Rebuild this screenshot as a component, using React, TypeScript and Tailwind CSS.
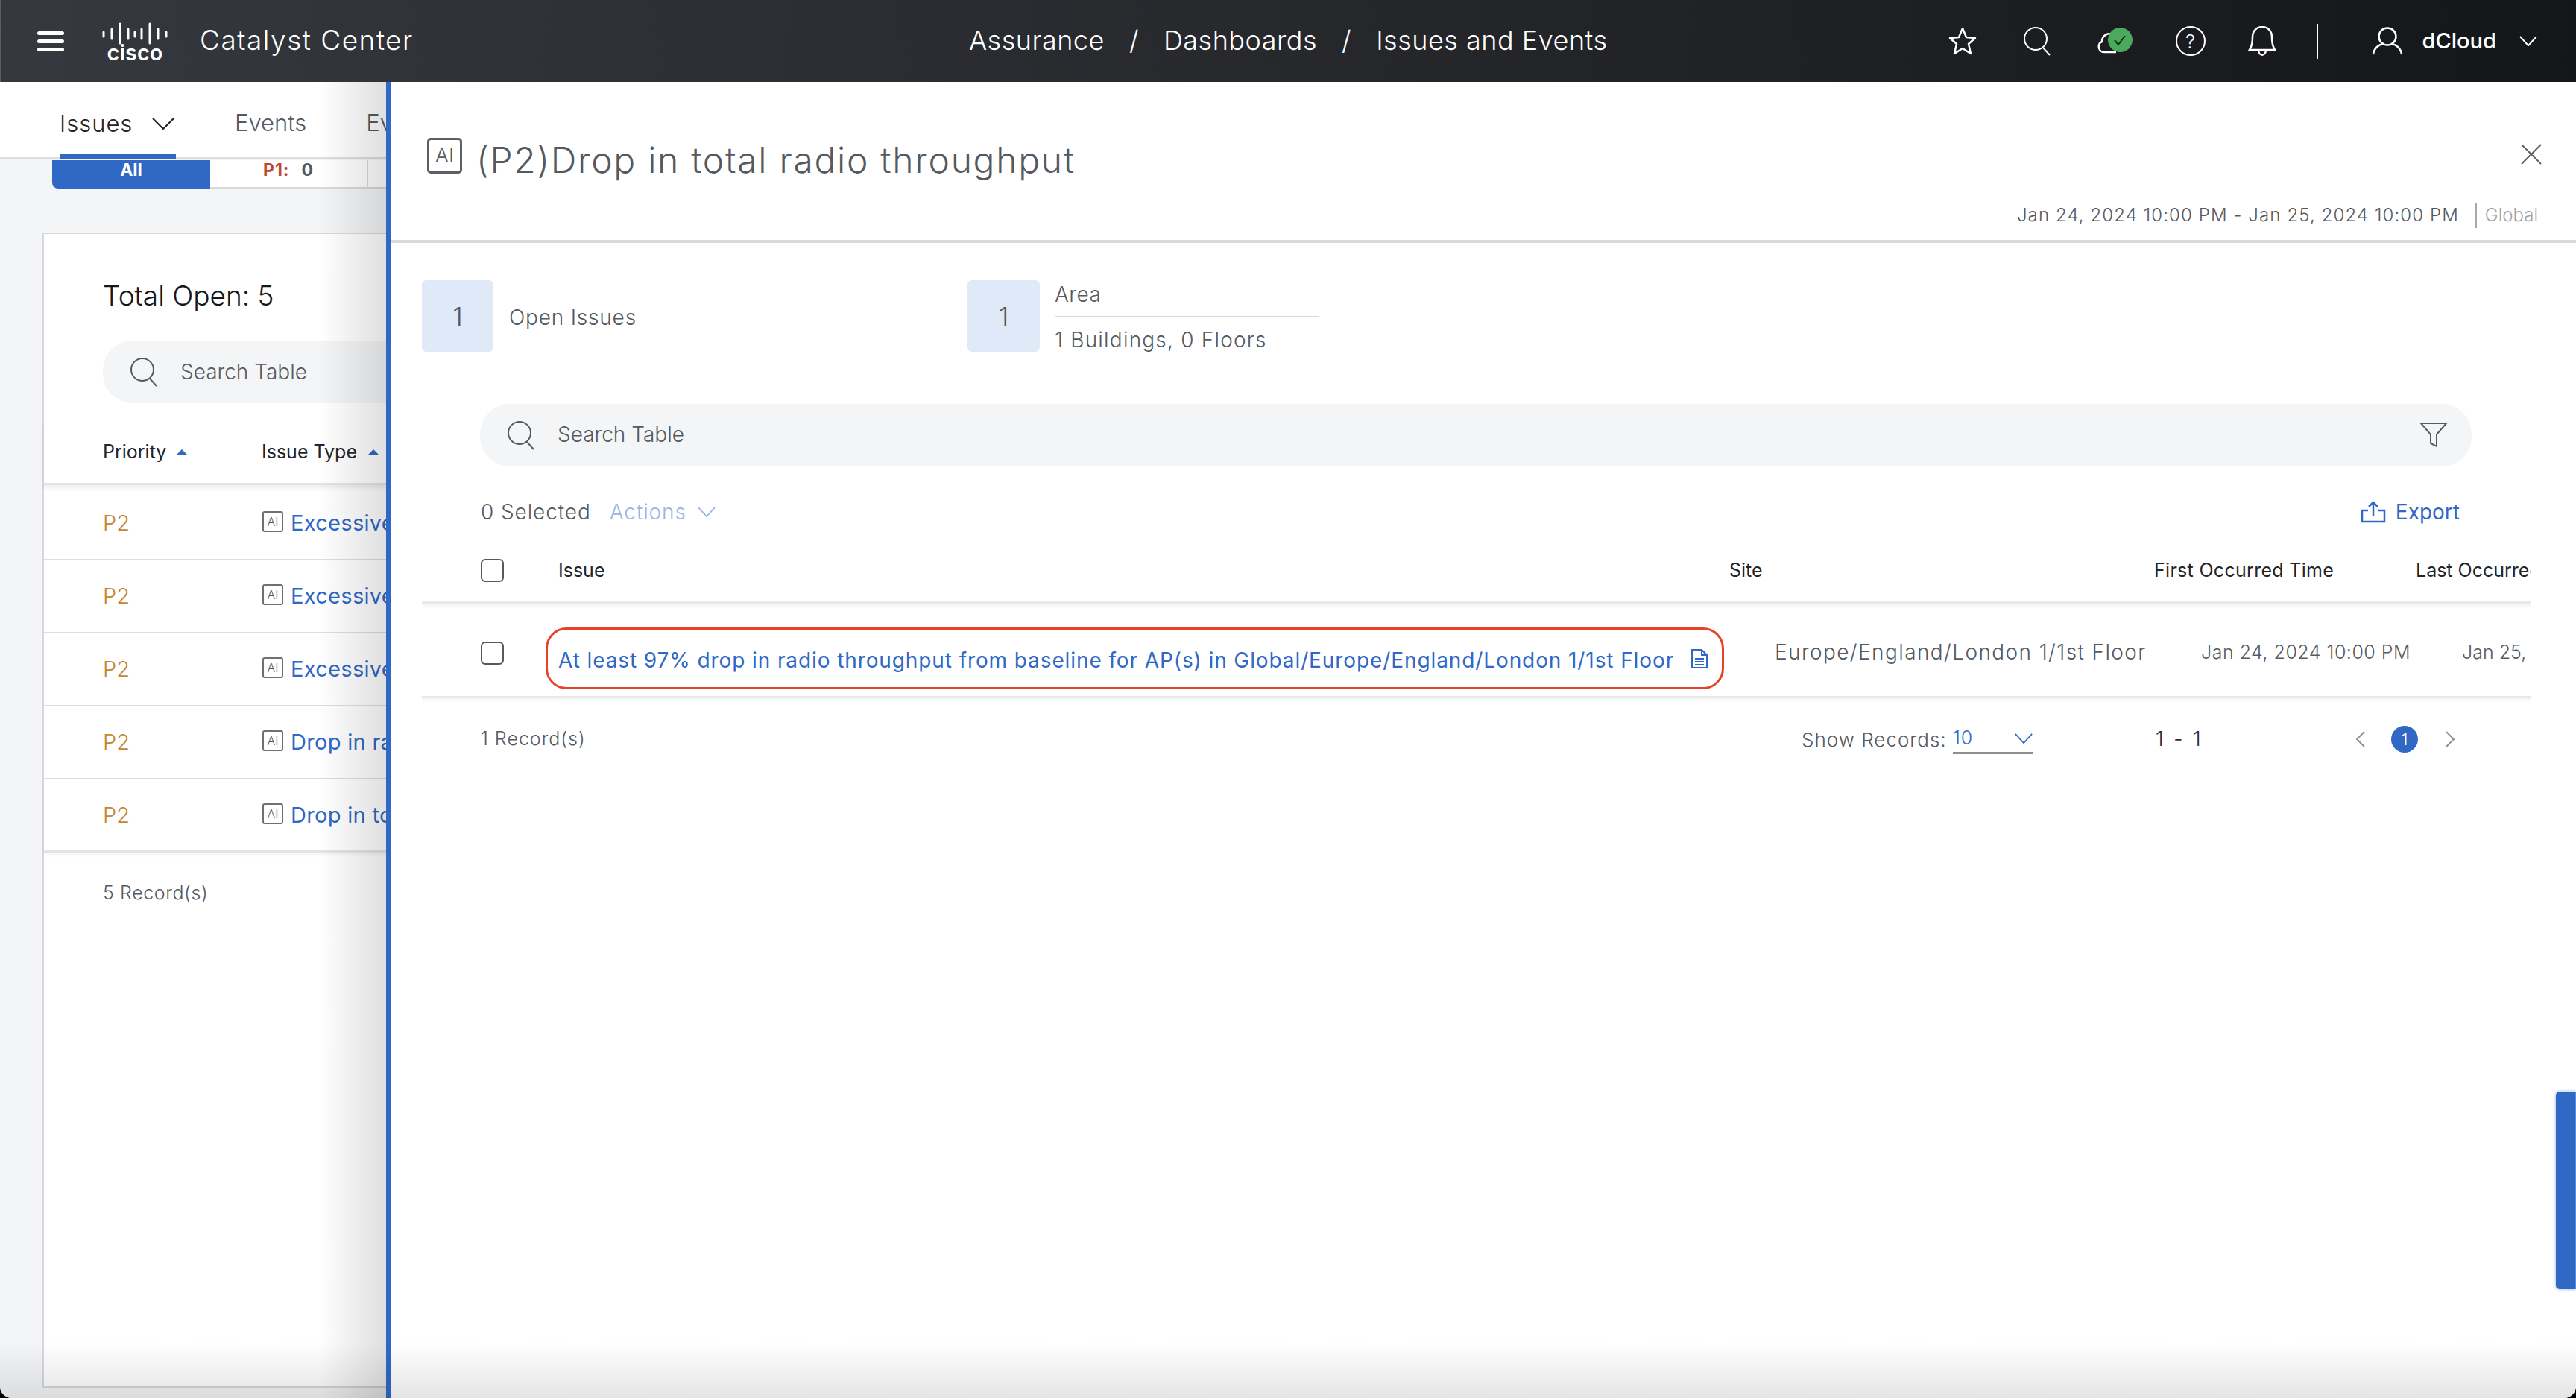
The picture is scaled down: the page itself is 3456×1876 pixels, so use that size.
import React from "react";

const rows = ["Excessive", "Excessive", "Excessive", "Drop in ra", "Drop in to"];

const SearchIcon = () => (
  <svg width="38" height="40" viewBox="0 0 38 40" fill="none" stroke="currentColor" strokeWidth="2">
    <circle cx="17" cy="17" r="15" />
    <path d="M27 29 L36 39" />
  </svg>
);

const Chevron = ({ w = 28, h = 16, sw = 2 }: { w?: number; h?: number; sw?: number }) => (
  <svg width={w} height={h} viewBox="0 0 28 16" fill="none" stroke="currentColor" strokeWidth={sw} preserveAspectRatio="none">
    <path d="M1 1 L14 15 L27 1" />
  </svg>
);

const AiIcon = ({ big }: { big?: boolean }) => (
  <span
    className={
      big
        ? "flex h-[48px] w-[47px] shrink-0 items-center justify-center rounded-[5px] border-[3px] border-[#5b6067] text-[27px] font-light text-[#555a61]"
        : "flex h-[28px] w-[28px] shrink-0 items-center justify-center rounded-[3px] border-2 border-[#6d7177] text-[16px] font-light text-[#555a61]"
    }
  >
    AI
  </span>
);

const CiscoLogo = () => (
  <div className="flex w-[88px] flex-col items-center">
    <svg width="88" height="30" viewBox="0 0 88 30" fill="none" stroke="#fff" strokeWidth="3" strokeLinecap="round">
      <path d="M2 13 V19 M13 9 V22 M24 2 V28 M35 9 V22 M44 13 V19 M53 9 V22 M64 2 V28 M75 9 V22 M86 13 V19" />
    </svg>
    <span className="mt-[1px] text-[29px] font-semibold leading-[20px] text-white">cisco</span>
  </div>
);

export default function App() {
  return (
    <div className="h-[1876px] w-[3456px] overflow-hidden bg-black font-['Inter',sans-serif]">
      <div className="relative flex h-[1876px] flex-col overflow-hidden rounded-b-[16px] bg-white">
        {/* top bar */}
        <header className="relative flex h-[110px] shrink-0 items-center border-l-2 border-[#5a5d62] bg-gradient-to-r from-[#35383e] via-[#26282c] to-[#14161a] text-white">
          <div className="ml-[48px] flex w-[36px] flex-col gap-[6px]">
            <div className="h-[5px] rounded-full bg-white" />
            <div className="h-[5px] rounded-full bg-white" />
            <div className="h-[5px] rounded-full bg-white" />
          </div>
          <div className="ml-[51px]">
            <CiscoLogo />
          </div>
          <span className="ml-[43px] pb-[3px] text-[37px] font-light tracking-[1.5px]">Catalyst Center</span>
          <nav className="ml-[745px] flex items-center gap-[33px] pb-[3px] text-[36px] font-light tracking-[0.5px]">
            <span>Assurance</span>
            <span>/</span>
            <span>Dashboards</span>
            <span>/</span>
            <span>Issues and Events</span>
          </nav>
          <div className="ml-[457px] flex items-center">
            <svg width="38" height="38" viewBox="0 0 38 38" fill="none" stroke="#fff" strokeWidth="2.5" strokeLinejoin="round">
              <path d="M19 2 L24 14 L36 15 L27 23 L30 36 L19 29 L8 36 L11 23 L2 15 L14 14 Z" />
            </svg>
            <span className="ml-[62px] text-white">
              <SearchIcon />
            </span>
            <span className="relative ml-[61px] block h-[36px] w-[48px]">
              <svg width="48" height="36" viewBox="0 0 48 36" fill="none" stroke="#fff" strokeWidth="2.5">
                <path d="M26 33 H10 C2 33 0 22 7 19 C7 10 16 6 21 10" />
              </svg>
              <span className="absolute right-0 top-0 flex h-[33px] w-[33px] items-center justify-center rounded-full bg-[#4aa95c]">
                <svg width="18" height="16" viewBox="0 0 18 16" fill="none" stroke="#10301a" strokeWidth="2">
                  <path d="M2 8 L7 14 L16 2" />
                </svg>
              </span>
            </span>
            <span className="ml-[58px] flex h-[40px] w-[40px] items-center justify-center rounded-full border-[2.5px] border-white text-[26px] font-light">?</span>
            <svg className="ml-[57px]" width="38" height="40" viewBox="0 0 38 40" fill="none" stroke="#fff" strokeWidth="2.5">
              <path d="M2 32 C6 26 6 20 6 15 C6 6 12 1 19 1 C26 1 32 6 32 15 C32 20 32 26 36 32 Z" />
              <path d="M14 32 C14 41 24 41 24 32" />
            </svg>
            <div className="ml-[54px] h-[47px] w-[2px] bg-white" />
            <svg className="ml-[72px]" width="42" height="38" viewBox="0 0 42 38" fill="none" stroke="#fff" strokeWidth="2.5">
              <circle cx="21" cy="13" r="11.5" />
              <path d="M2 37 C3 28 10 24 15 23 M40 37 C39 28 32 24 27 23" />
            </svg>
            <span className="ml-[26px] text-[29px] font-medium">dCloud</span>
            <span className="ml-[31px]">
              <Chevron w={24} h={14} sw={2.5} />
            </span>
          </div>
        </header>

        <div className="relative flex flex-1 overflow-hidden">
          {/* issue list behind the drawer */}
          <section className="relative w-[518px] shrink-0 overflow-hidden bg-[#f4f5f7]">
            <div className="flex h-[103px] border-b-2 border-[#dcdde0] bg-white text-[31px] font-light">
              <div className="ml-[80px] flex h-[103px] w-[156px] shrink-0 items-center border-b-[7px] border-[#2f68c5] pt-[16px] text-[#1f2327]">
                <span className="tracking-[1px]">Issues</span>
                <span className="ml-[26px]">
                  <Chevron w={30} h={16} />
                </span>
              </div>
              <div className="ml-[79px] flex items-center pt-[9px] text-[#555a61]">Events</div>
              <div className="ml-[80px] flex items-center pt-[9px] text-[#555a61]">Ev</div>
            </div>
            <div className="ml-[70px] mt-[2px] flex h-[38px] w-[520px] text-[23px] font-bold">
              <div className="flex w-[212px] shrink-0 items-start justify-center rounded-bl-[8px] bg-[#2f68c5] leading-[26px] text-white">All</div>
              <div className="flex w-[212px] shrink-0 items-start justify-center border-b-2 border-r-2 border-[#d8d9dc] bg-white leading-[26px] tracking-[1px] text-[#555a61]">
                <span className="text-[#c0472c]">P1:</span>
                <span className="ml-[16px]">0</span>
              </div>
              <div className="w-[30px] shrink-0 border-b-2 border-[#d8d9dc] bg-white" />
            </div>
            <div className="ml-[57px] mt-[59px] h-[1550px] w-[520px] border-2 border-[#d7d8dc] bg-white">
              <div className="ml-[79px] mt-[53px] text-[37px] font-light leading-[60px] text-[#15181b]">Total Open: 5</div>
              <div className="ml-[79px] mt-[30px] flex h-[84px] items-center rounded-l-[40px] bg-[#f4f5f7] pl-[36px] text-[#555a61]">
                <SearchIcon />
                <span className="ml-[30px] text-[28px] font-light">Search Table</span>
              </div>
              <div className="mt-[26px] flex h-[84px] items-center border-b-[3px] border-[#e3e4e6] pb-[2px] pl-[79px] text-[25px] text-[#22262a] shadow-[0_4px_6px_rgba(0,0,0,0.08)]">
                <span className="w-[85px]">Priority</span>
                <span className="ml-[13px] h-0 w-0 border-x-[8px] border-b-[8px] border-x-transparent border-b-[#2f68c5]" />
                <span className="ml-[99px] whitespace-nowrap">Issue Type</span>
                <span className="ml-[14px] h-0 w-0 shrink-0 border-x-[8px] border-b-[8px] border-x-transparent border-b-[#2f68c5]" />
              </div>
              <div className="mt-[3px]">
                {rows.map((r, i) => (
                  <div
                    key={i}
                    className={
                      i === 4
                        ? "flex h-[98px] items-center border-b-[3px] border-[#e3e4e6] pl-[79px] text-[29px] shadow-[0_3px_6px_rgba(0,0,0,0.05)]"
                        : "flex h-[98px] items-center border-b-2 border-[#dcdde0] pl-[79px] text-[29px]"
                    }
                  >
                    <span className="w-[214px] font-light text-[#c5862e]">P2</span>
                    <span className="-translate-y-[2px]">
                      <AiIcon />
                    </span>
                    <span className="ml-[10px] whitespace-nowrap tracking-[0.3px] text-[#2f68c5]">{r}</span>
                  </div>
                ))}
              </div>
              <div className="ml-[79px] mt-[36px] text-[25px] font-light tracking-[0.6px] text-[#555a61]">5 Record(s)</div>
            </div>
            <div className="pointer-events-none absolute inset-y-0 right-0 w-[90px] bg-gradient-to-r from-transparent to-[#00000020]" />
          </section>

          {/* drawer */}
          <section className="relative flex-1 border-l-[6px] border-[#2f68c5] bg-white text-[#555a61]">
            <div className="h-[216px] border-b-4 border-[#d8d9dc]">
              <div className="flex items-start justify-between pl-[49px] pr-[46px] pt-[75px]">
                <div className="flex items-start">
                  <AiIcon big />
                  <span className="ml-[19px] text-[48px] font-light leading-[60px] tracking-[1.7px]">(P2)Drop in total radio throughput</span>
                </div>
                <svg className="mt-[8px]" width="28" height="28" viewBox="0 0 28 28" stroke="#5b6067" strokeWidth="2">
                  <path d="M1 1 L27 27 M27 1 L1 27" />
                </svg>
              </div>
              <div className="mt-[27px] flex h-[34px] items-center justify-end pr-[51px] text-[24px] font-light">
                <span className="tracking-[1.1px]">Jan 24, 2024 10:00 PM - Jan 25, 2024 10:00 PM</span>
                <span className="ml-[22px] h-[34px] border-l-2 border-[#a5a8ad]" />
                <span className="ml-[11px] text-[#9ea3a9]">Global</span>
              </div>
            </div>

            <div className="ml-[42px] mt-[50px] flex h-[96px]">
              <div className="flex w-[732px] items-center">
                <div className="flex h-[96px] w-[96px] items-center justify-center rounded-[6px] bg-[#e0e9f7] text-[34px] font-light">1</div>
                <span className="ml-[21px] pt-[3px] text-[28px] font-light tracking-[0.8px]">Open Issues</span>
              </div>
              <div className="flex items-center">
                <div className="flex h-[96px] w-[97px] items-center justify-center rounded-[6px] bg-[#e0e9f7] text-[34px] font-light">1</div>
                <div className="ml-[20px] flex h-[96px] w-[355px] flex-col">
                  <div className="h-[50px] shrink-0 border-b-2 border-[#d8d9dc] text-[28px] font-light leading-[38px] tracking-[0.5px]">Area</div>
                  <div className="shrink-0 pt-[12px] text-[28px] font-light leading-[36px] tracking-[1.2px]">1 Buildings, 0 Floors</div>
                </div>
              </div>
            </div>

            <div className="ml-[120px] mr-[140px] mt-[70px] flex h-[84px] items-center rounded-[40px] bg-[#f4f5f7] pl-[36px] pr-[32px]">
              <SearchIcon />
              <span className="ml-[30px] pb-[3px] text-[28px] font-light">Search Table</span>
              <svg className="ml-auto" width="38" height="36" viewBox="0 0 38 36" fill="none" stroke="currentColor" strokeWidth="2">
                <path d="M2 2 H36 L23 17 V33 L15 29 V17 Z" />
              </svg>
            </div>

            <div className="ml-[121px] mr-[156px] mt-[34px] flex h-[54px] items-center text-[28px] font-light">
              <span className="tracking-[0.9px]">0 Selected</span>
              <span className="ml-[25px] tracking-[0.9px] text-[#9ab6e4]">Actions</span>
              <span className="ml-[15px] text-[#9ab6e4]">
                <Chevron w={24} h={14} />
              </span>
              <span className="ml-auto flex items-center text-[#2f68c5]">
                <svg width="34" height="30" viewBox="0 0 34 30" fill="none" stroke="currentColor" strokeWidth="2.5">
                  <path d="M17 21 V2 M11 8 L17 2 L23 8 M10 13 H2 V28 H32 V13 H24" />
                </svg>
                <span className="ml-[13px] font-normal">Export</span>
              </span>
            </div>

            <div className="ml-[42px] w-[2830px] overflow-hidden pb-[8px]">
              <div className="flex h-[96px] items-center border-b-[3px] border-[#e8e9eb] pl-[79px] pt-[10px] text-[25px] text-[#22262a] shadow-[0_3px_5px_rgba(0,0,0,0.06)]">
                <span className="h-[31px] w-[31px] shrink-0 rounded-[6px] border-2 border-[#555a61]" />
                <span className="ml-[73px] w-[1571px] shrink-0">Issue</span>
                <span className="w-[570px] shrink-0">Site</span>
                <span className="w-[351px] shrink-0 tracking-[0.3px]">First Occurred Time</span>
                <span className="whitespace-nowrap">Last Occurred Time</span>
              </div>
              <div className="flex h-[127px] items-start border-b-[3px] border-[#e8e9eb] pl-[79px] shadow-[0_3px_5px_rgba(0,0,0,0.05)]">
                <span className="mt-[51px] h-[31px] w-[31px] shrink-0 rounded-[6px] border-2 border-[#555a61]" />
                <div className="ml-[56px] mt-[32px] flex h-[83px] w-[1581px] shrink-0 items-center rounded-[28px] border-[3px] border-[#e8432a] pl-[14px] pt-[4px] text-[28px] text-[#2f68c5]">
                  <span className="whitespace-nowrap tracking-[0.9px]">At least 97% drop in radio throughput from baseline for AP(s) in Global/Europe/England/London 1/1st Floor</span>
                  <svg className="ml-[22px] -translate-y-[2px]" width="24" height="28" viewBox="0 0 24 28" fill="none" stroke="currentColor" strokeWidth="2">
                    <path d="M2 2 H15 L22 9 V26 H2 Z M15 2 V9 H22 M6 14 H18 M6 18 H18 M6 22 H18" />
                  </svg>
                </div>
                <span className="ml-[68px] mt-[47px] w-[572px] shrink-0 whitespace-nowrap text-[28px] font-light leading-[36px] tracking-[1.4px]">Europe/England/London 1/1st Floor</span>
                <span className="mt-[49px] w-[350px] shrink-0 whitespace-nowrap text-[25px] font-light leading-[32px] tracking-[0.5px]">Jan 24, 2024 10:00 PM</span>
                <span className="mt-[49px] whitespace-nowrap text-[25px] font-light leading-[32px]">Jan 25, 2024 10:00 PM</span>
              </div>
            </div>

            <div className="ml-[121px] mt-[25px] flex h-[44px] items-center text-[25px] font-light">
              <span className="w-[1772px] shrink-0 tracking-[1px]">1 Record(s)</span>
              <div className="flex w-[475px] shrink-0 items-center">
                <span className="w-[203px] text-[26px] tracking-[1px]">Show Records:</span>
                <div className="flex h-[40px] w-[107px] items-center justify-between border-b-[3px] border-[#8d9094] text-[#2f68c5]">
                  <span className="tracking-[1px]">10</span>
                  <Chevron w={24} h={14} />
                </div>
              </div>
              <span className="w-[268px] shrink-0 text-[27px] tracking-[3px] text-[#2a2e33]">1 - 1</span>
              <svg width="14" height="24" viewBox="0 0 14 24" fill="none" stroke="#8d9094" strokeWidth="2">
                <path d="M12 2 L2 12 L12 22" />
              </svg>
              <span className="ml-[34px] flex h-[36px] w-[36px] items-center justify-center rounded-full bg-[#2f68c5] text-[22px] text-white">1</span>
              <svg className="ml-[36px]" width="14" height="24" viewBox="0 0 14 24" fill="none" stroke="#8d9094" strokeWidth="2">
                <path d="M2 2 L12 12 L2 22" />
              </svg>
            </div>

            {/* scroller tab on the right edge */}
            <div className="absolute bottom-[146px] right-0 h-[265px] w-[27px] rounded-l-[5px] border-r-2 border-[#5a8fd8] bg-[#2f68c5] shadow-[0_0_4px_rgba(47,104,197,0.5)]" />
          </section>

          <div className="pointer-events-none absolute inset-x-0 bottom-0 h-[76px] bg-gradient-to-b from-transparent to-[#0000001a]" />
        </div>
      </div>
    </div>
  );
}
